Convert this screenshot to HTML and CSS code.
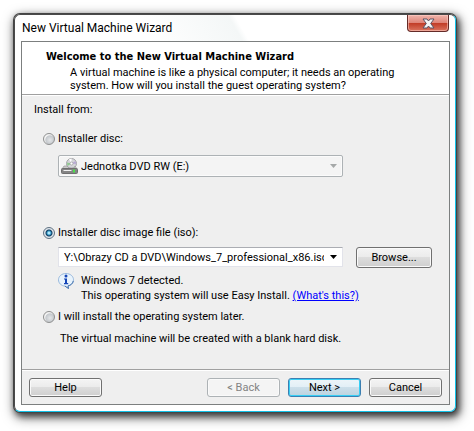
FILE: index.html
```html
<!DOCTYPE html>
<html lang="en">
<head>
<meta charset="utf-8">
<title>New Virtual Machine Wizard</title>
<link rel="stylesheet" href="styles.css">
</head>
<body>
<main class="window">
  <header class="titlebar">
    <h1 class="title">New Virtual Machine Wizard</h1>
    <button class="close" type="button" aria-label="Close">
      <svg width="13" height="11" viewBox="0 0 13 11" aria-hidden="true"><path d="M1 1h4l1.500 2L8 1h4L8.700 5.500 12 10H8L6.500 8 5 10H1l3.300-4.500z" fill="#f4f4f4" stroke="#5b5364" stroke-width="1" stroke-linejoin="round"/></svg>
    </button>
  </header>
  <form class="client">
    <div class="intro">
      <h2 class="heading">Welcome to the New Virtual Machine Wizard</h2>
      <p class="lead">A virtual machine is like a physical computer; it needs an operating<br>system. How will you install the guest operating system?</p>
    </div>
    <fieldset class="options">
      <legend class="legend">Install from:</legend>
      <label class="choice first"><input class="radio" type="radio" name="source">Installer disc:</label>
      <div class="drive">
        <svg class="drive-icon" width="17" height="16" viewBox="0 0 17 16" aria-hidden="true">
          <circle cx="10.500" cy="5.500" r="5" fill="#d5d5da" stroke="#a5a5a8"/>
          <path d="M10.500 5.500 8 1.200l2.500-.7z" fill="#fff"/>
          <path d="M10.500 5.500 6 4.500 6.500 8z" fill="#8fca8f"/>
          <path d="M10.500 5.500 14.500 3l.8 3z" fill="#b9a9d5"/>
          <circle cx="10.500" cy="5.500" r="1.500" fill="#fff" stroke="#999" stroke-width=".7"/>
          <path d="M3 8h3l2 2h5l1-2 2 3H1z" fill="#c9c9c9" stroke="#9b9b9b" stroke-width=".7"/>
          <rect x=".5" y="10.500" width="16" height="5" rx="1" fill="#858585" stroke="#707070"/>
          <path d="M2.500 12.500h8" stroke="#f2f2f2"/>
          <rect x="12" y="11.500" width="2" height="3" fill="#4be04b"/>
        </svg>
        <select class="drive-select" aria-label="Installer disc drive" disabled><option>Jednotka DVD RW (E:)</option></select>
        <svg class="arrow muted" width="7" height="4" viewBox="0 0 7 4" aria-hidden="true"><path d="M0 0h7L3.500 4z"/></svg>
      </div>
      <label class="choice"><input class="radio" type="radio" name="source" checked>Installer disc image file (iso):</label>
      <div class="file">
        <div class="combo">
          <input class="path" type="text" aria-label="Image file path" value="Y:\Obrazy CD a DVD\Windows_7_professional_x86.iso">
          <button class="drop" type="button" aria-label="Show recent files"><svg class="arrow" width="7" height="4" viewBox="0 0 7 4" aria-hidden="true"><path d="M0 0h7L3.500 4z"/></svg></button>
        </div>
        <button class="button" type="button">Browse...</button>
      </div>
      <div class="notice">
        <svg width="16" height="16" viewBox="0 0 16 16" aria-hidden="true">
          <path d="M8 .5c4.200 0 7.500 2.700 7.500 6.300 0 3.200-2.500 5.400-5.500 6.100L10.500 15.500 7 13.100C3.300 12.900.5 10.200.5 6.800.5 3.200 3.800.5 8 .5z" fill="#e8f3fc" stroke="#98b8dc"/>
          <path d="M15.300 8c-.5 2.800-2.800 4.400-5.300 4.900l.5 2.600L7 13.100" fill="none" stroke="#4774ae"/>
          <circle cx="8" cy="3" r="1.500" fill="#1545b8"/>
          <path d="M6 5.500h3v4.500h1.200v1.200H6V10h1V6.600H6z" fill="#1545b8"/>
        </svg>
        <p class="notice-text">Windows 7 detected.<br>This operating system will use Easy Install. <a class="link" href="#help">(What's this?)</a></p>
      </div>
      <label class="choice"><input class="radio" type="radio" name="source">I will install the operating system later.</label>
      <p class="hint">The virtual machine will be created with a blank hard disk.</p>
    </fieldset>
    <footer class="actions">
      <button class="button help" type="button">Help</button>
      <button class="button" type="button" disabled>&lt; Back</button>
      <button class="button primary" type="submit">Next &gt;</button>
      <button class="button" type="button">Cancel</button>
    </footer>
  </form>
</main>
</body>
</html>
```
FILE: styles.css
```css
* { box-sizing: border-box; }

body {
  margin: 0;
  padding: 14px 18px 18px 14px;
  background: #fff;
  color: #000;
  font: 11px/15px Roboto, sans-serif;
}

h1, h2, p, fieldset, legend { margin: 0; padding: 0; }
button, input, select { font: inherit; color: inherit; margin: 0; }

.window {
  border: 1px solid #4a4a4a;
  border-right-color: #12c3ea;
  border-bottom-color: #12c3ea;
  border-radius: 6px;
  padding: 0 5px 6px 6px;
  background: linear-gradient(60deg, #fff 0 52%, #f4f7f7 66%, #fff 67%);
  box-shadow: 0 0 0 1px #444, 2px 3px 6px 1px rgba(0, 0, 0, .6), 2px 4px 12px 2px rgba(0, 0, 0, .5);
}

.titlebar {
  display: flex;
  align-items: flex-start;
  justify-content: space-between;
  height: 26px;
  padding: 0 1px;
}

.title { font: 12px/26px Roboto, sans-serif; }

.close {
  display: grid;
  place-items: center;
  width: 42px;
  height: 17px;
  padding: 0;
  border: 1px solid #642b28;
  border-top: 0;
  border-radius: 0 0 4px 4px;
  background: linear-gradient(#f0b5ac, #df8579 48%, #c03a25 50%, #db745f);
  box-shadow: inset 0 0 0 1px rgba(255, 210, 200, .55);
}

.client {
  border: 1px solid #7c7f7f;
  background: #efefef;
}

.intro {
  padding: 7px 4px 2px 24px;
  border-bottom: 1px solid #a0a0a0;
  background: #fff;
}

.heading { font: bold 11px/15px "DejaVu Sans Condensed", sans-serif; }
.lead { padding: 2px 0 0 24px; line-height: 13px; }

.options {
  min-width: 0;
  padding: 7px 12px 22px;
  border: 0;
  box-shadow: inset 0 1px #fff;
}

.legend {
  float: left;
  width: 100%;
  line-height: 16px;
}

.choice {
  display: flex;
  align-items: center;
  gap: 3px;
  margin-left: 9px;
  line-height: 16px;
}

.first {
  clear: both;
  padding-top: 13px;
}

.radio {
  appearance: none;
  width: 12px;
  height: 12px;
  border: 1px solid #8e8f8f;
  border-radius: 50%;
  background: radial-gradient(circle at 60% 60%, #e4e6e8, #c4c8cc 50%, #f2f2f2 60%);
}

.radio:checked {
  border-color: #5f7182;
  background: radial-gradient(circle, #aee8fa 0 1px, #2a8fc0 2px, #123a5d 3px, #dfe6ec 4px);
}

.drive {
  display: flex;
  align-items: center;
  width: 285px;
  height: 22px;
  margin: 8px 0 48px 24px;
  padding: 0 5px 0 2px;
  border: 1px solid #adb2b5;
  border-radius: 2px;
  background: #f4f4f4;
  box-shadow: inset 0 0 0 1px #fbfbfb;
}

.drive-select {
  appearance: none;
  flex: 1;
  min-width: 0;
  padding: 0 3px;
  border: 0;
  background: none;
  color: #000;
  opacity: 1;
}

.arrow { display: block; fill: #000; }
.muted { fill: #a5a8a8; }

.file {
  display: flex;
  gap: 13px;
  margin: 6px 0 0 24px;
}

.combo {
  display: flex;
  width: 285px;
  height: 20px;
  border: 1px solid #e2e3ea;
  border-top-color: #abadb3;
  background: #fff;
}

.path {
  flex: 1;
  min-width: 0;
  padding: 0 0 0 5px;
  border: 0;
  background: none;
}

.drop {
  display: grid;
  place-items: center;
  width: 18px;
  padding: 0;
  border: 0;
  background: none;
}

.button {
  min-width: 73px;
  height: 19px;
  padding: 0 3px;
  border: 1px solid #707070;
  border-radius: 3px;
  background: linear-gradient(#f4f4f4, #ebebeb 49%, #dddddd 50%, #cfcfcf);
  box-shadow: inset 0 0 0 1px #fafafa;
  line-height: 17px;
}

.file .button { width: 76px; height: 21px; }

.button:disabled {
  border-color: #adb2b5;
  background: #f4f4f4;
  color: #838383;
}

.primary {
  border-color: #3c7fb1;
  background: linear-gradient(#eef5f9, #e2eff6 49%, #ccdfea 50%, #bcd3df);
  box-shadow: inset 0 0 0 1px #37cff5;
}

.notice {
  display: flex;
  gap: 7px;
  margin: 5px 0 6px 24px;
}

.notice-text { line-height: 15px; }
.link { color: #00f; }
.hint { margin: 6px 0 0 26px; line-height: 16px; }

.actions {
  display: flex;
  gap: 8px;
  padding: 8px 7px 7px;
  border-top: 1px solid #a0a0a0;
  box-shadow: inset 0 1px #fff;
}

.help { margin-right: auto; }
```
